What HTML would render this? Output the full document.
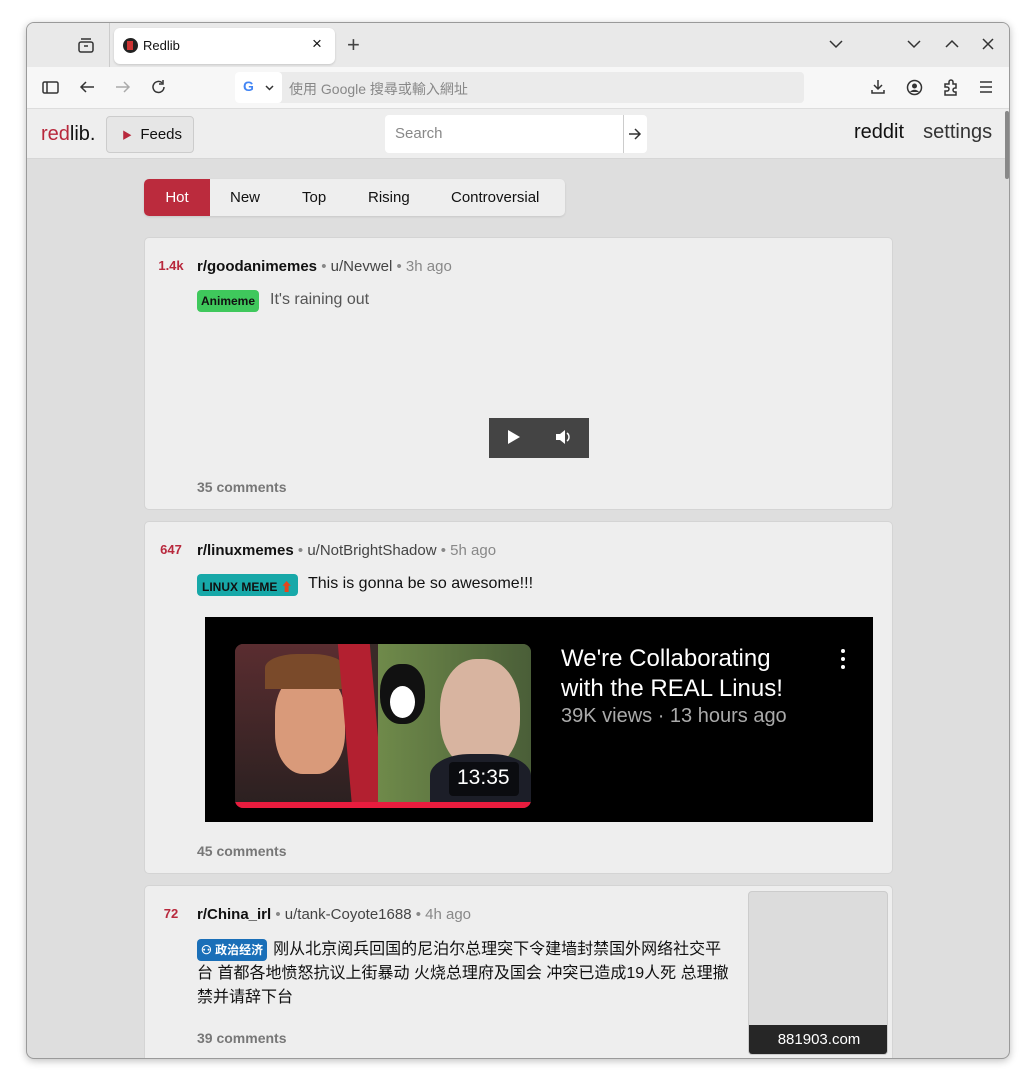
<!DOCTYPE html>
<html><head><meta charset="utf-8">
<style>
*{box-sizing:border-box;margin:0;padding:0}
body{width:1036px;height:1088px;background:#fff;font-family:"Liberation Sans","Noto Sans CJK SC",sans-serif;position:relative;overflow:hidden;color:#111}
.a{position:absolute}
#win{left:26px;top:22px;width:984px;height:1037px;border:1px solid #9a9a9a;border-radius:8px;overflow:hidden;background:#dedede;box-shadow:0 2px 8px rgba(0,0,0,.25)}
#tabs{left:0;top:0;width:984px;height:44px;background:#e9e9e9}
#tool{left:0;top:44px;width:984px;height:42px;background:#f7f7f7;border-bottom:1px solid #ddd}
#hdr{left:0;top:86px;width:984px;height:50px;background:#eeeeee;border-bottom:1px solid #d6d6d6}
.ic{stroke:#333;fill:none;stroke-width:1.5}
.card{background:#eeeeee;border:1px solid #d4d4d4;border-radius:5px}
.score{color:#b8283c;font-size:13px;font-weight:bold;width:40px;text-align:center}
.meta{font-size:15px;color:#444}
.meta b{color:#111}
.meta .g{color:#888}
.cm{font-size:14px;font-weight:bold;color:#777}
</style></head><body>
<div id="win" class="a">
 <div id="tabs" class="a">
  <svg class="a" style="left:50px;top:14px" width="18" height="16"><rect x="2" y="5" width="14" height="10" rx="2" class="ic"/><path d="M4 2h10M7 9h4" class="ic"/></svg>
  <div class="a" style="left:82px;top:0;width:1px;height:44px;background:#ccc"></div>
  <div class="a" style="left:87px;top:5px;width:221px;height:36px;background:#fff;border-radius:6px;box-shadow:0 1px 2px rgba(0,0,0,.15)"></div>
  <div class="a" style="left:96px;top:15px;width:15px;height:15px;border-radius:50%;background:#222"><div class="a" style="left:4px;top:3px;width:6px;height:9px;background:#c33"></div></div>
  <div class="a" style="left:116px;top:15px;font-size:13px">Redlib</div>
  <div class="a" style="left:285px;top:11px;font-size:17px">×</div>
  <div class="a" style="left:320px;top:9px;font-size:22px;color:#444;font-weight:300">+</div>
  <svg class="a" style="left:802px;top:16px" width="14" height="10"><path d="M1 2l6 6 6-6" class="ic"/></svg>
  <svg class="a" style="left:880px;top:16px" width="14" height="10"><path d="M1 2l6 6 6-6" class="ic"/></svg>
  <svg class="a" style="left:918px;top:16px" width="14" height="10"><path d="M1 8l6-6 6 6" class="ic"/></svg>
  <svg class="a" style="left:955px;top:15px" width="12" height="12"><path d="M1 1l10 10M11 1L1 11" class="ic"/></svg>
 </div>
 <div id="tool" class="a">
  <svg class="a" style="left:15px;top:13px" width="18" height="16"><rect x="1" y="2" width="15" height="11" rx="1.5" class="ic"/><path d="M5 2v11" class="ic" stroke-width="3"/></svg>
  <svg class="a" style="left:52px;top:13px" width="16" height="14"><path d="M15 7H2M7 2L2 7l5 5" class="ic"/></svg>
  <svg class="a" style="left:88px;top:13px" width="16" height="14"><path d="M1 7h13M9 2l5 5-5 5" fill="none" stroke="#aaa" stroke-width="1.5"/></svg>
  <svg class="a" style="left:124px;top:12px" width="16" height="16"><path d="M13 8a5.5 5.5 0 1 1-2-4.3M12 1v4H8" class="ic"/></svg>
  <div class="a" style="left:208px;top:5px;width:569px;height:31px;background:#ebebeb;border-radius:4px"></div>
  <div class="a" style="left:208px;top:5px;width:47px;height:31px;background:#fff;border-radius:4px"></div>
  <div class="a" style="left:216px;top:11px;font-size:14px;font-weight:bold;color:#4285f4">G</div>
  <svg class="a" style="left:238px;top:18px" width="9" height="6"><path d="M1 1l3.5 3.5L8 1" class="ic"/></svg>
  <div class="a" style="left:262px;top:12px;font-size:14px;color:#888">使用 Google 搜尋或輸入網址</div>
  <svg class="a" style="left:843px;top:12px" width="16" height="16"><path d="M8 1v9M4 6l4 4 4-4M2 11v3h12v-3" class="ic"/></svg>
  <svg class="a" style="left:879px;top:12px" width="17" height="17"><circle cx="8.5" cy="8.5" r="7" class="ic"/><circle cx="8.5" cy="7" r="2.5" fill="#333"/><path d="M4 13c2-3 7-3 9 0" fill="#333"/></svg>
  <svg class="a" style="left:916px;top:12px" width="16" height="17"><path d="M2 5h4V3a2 2 0 0 1 4 0v2h3v4h-1a2 2 0 0 0 0 4h1v3H2v-4h2a2 2 0 0 0 0-4H2z" class="ic"/></svg>
  <svg class="a" style="left:952px;top:14px" width="14" height="12"><path d="M1 1h12M1 6h12M1 11h12" class="ic"/></svg>
 </div>
 <div id="hdr" class="a">
  <div class="a" style="left:14px;top:14px;font-size:20px"><span style="color:#b8283c">red</span>lib.</div>
  <div class="a" style="left:79px;top:7px;width:88px;height:37px;border:1px solid #ccc;border-radius:4px;background:#e6e6e6;font-size:15px;padding:9px 0 0 15px"><span style="color:#b8283c;font-size:10px">▶</span>&nbsp; Feeds</div>
  <div class="a" style="left:358px;top:6px;width:238px;height:38px;background:#fff;border-radius:4px 0 0 4px;font-size:15px;color:#888;padding:10px 10px">Search</div>
  <div class="a" style="left:596px;top:6px;width:24px;height:38px;background:#fff;border-left:1px solid #ccc;border-radius:0 4px 4px 0"></div>
  <svg class="a" style="left:601px;top:19px" width="14" height="12"><path d="M1 6h11M7 1l5 5-5 5" class="ic"/></svg>
  <div class="a" style="left:827px;top:12px;font-size:20px;color:#111;word-spacing:4px">reddit&nbsp; <span style="color:#333">settings</span></div>
 </div>
 <div class="a" style="left:978px;top:88px;width:4px;height:68px;background:#888;border-radius:2px"></div>
 <div class="a" style="left:117px;top:156px;width:421px;height:37px;background:#eeeeee;border-radius:5px;box-shadow:0 1px 2px rgba(0,0,0,.1);font-size:15px"></div>
 <div class="a" style="left:117px;top:156px;width:66px;height:37px;background:#bb2b3d;border-radius:5px 0 0 5px;color:#fff;font-size:15px;text-align:center;line-height:37px">Hot</div>
 <div class="a" style="left:203px;top:166px;font-size:15px">New</div>
 <div class="a" style="left:275px;top:166px;font-size:15px">Top</div>
 <div class="a" style="left:341px;top:166px;font-size:15px">Rising</div>
 <div class="a" style="left:424px;top:166px;font-size:15px">Controversial</div>
 <div class="a card" style="left:117px;top:214px;width:749px;height:273px"></div>
 <div class="a score" style="left:124px;top:235px">1.4k</div>
 <div class="a meta" style="left:170px;top:235px"><b>r/goodanimemes</b> <span class="g">•</span> u/Nevwel <span class="g">• 3h ago</span></div>
 <div class="a" style="left:170px;top:267px;height:22px;background:#3fc85c;border-radius:4px;font-size:12px;font-weight:bold;padding:4px 4px;color:#111">Animeme</div>
 <div class="a" style="left:243px;top:268px;font-size:16px;color:#555">It's raining out</div>
 <div class="a" style="left:462px;top:395px;width:100px;height:40px;background:#444"></div>
 <svg class="a" style="left:480px;top:406px" width="14" height="16"><path d="M1 1l12 7-12 7z" fill="#fff"/></svg>
 <svg class="a" style="left:528px;top:406px" width="18" height="16"><path d="M1 5h4l5-4v14l-5-4H1z" fill="#fff"/><path d="M12 4a5 5 0 0 1 0 8" stroke="#fff" fill="none" stroke-width="1.5"/></svg>
 <div class="a cm" style="left:170px;top:456px">35 comments</div>
 <div class="a card" style="left:117px;top:498px;width:749px;height:353px"></div>
 <div class="a score" style="left:124px;top:519px">647</div>
 <div class="a meta" style="left:170px;top:519px"><b>r/linuxmemes</b> <span class="g">•</span> u/NotBrightShadow <span class="g">• 5h ago</span></div>
 <div class="a" style="left:170px;top:551px;height:22px;background:#17a8a8;border-radius:4px;font-size:12px;font-weight:bold;padding:4px 5px;color:#111">LINUX MEME <span style="color:#e5461c">⬆</span></div>
 <div class="a" style="left:281px;top:552px;font-size:16px;color:#111">This is gonna be so awesome!!!</div>
 <div class="a" style="left:178px;top:594px;width:668px;height:205px;background:#000;overflow:hidden">
  <div class="a" style="left:30px;top:27px;width:296px;height:164px;border-radius:8px;overflow:hidden;background:#3a2a28">
   <div class="a" style="left:0;top:0;width:120px;height:164px;background:linear-gradient(#5a2d30,#2a2020)"></div>
   <div class="a" style="left:40px;top:30px;width:70px;height:100px;border-radius:40%;background:#d99a7a"></div>
   <div class="a" style="left:30px;top:10px;width:80px;height:35px;border-radius:40% 40% 0 0;background:#7a4a2a"></div>
   <div class="a" style="left:110px;top:0;width:32px;height:164px;background:#b32030;transform:skewX(5deg)"></div>
   <div class="a" style="left:143px;top:0;width:153px;height:164px;background:linear-gradient(90deg,#6f8a4a,#4a5e38)"></div>
   <div class="a" style="left:145px;top:20px;width:45px;height:60px;border-radius:45%;background:#111"><div class="a" style="left:10px;top:22px;width:25px;height:32px;border-radius:50%;background:#fff"></div></div>
   <div class="a" style="left:205px;top:15px;width:80px;height:110px;border-radius:45%;background:#d8b4a0"></div>
   <div class="a" style="left:195px;top:110px;width:101px;height:54px;background:#1c1e28;border-radius:40% 40% 0 0"></div>
   <div class="a" style="left:214px;top:118px;width:70px;height:34px;background:rgba(0,0,0,.6);border-radius:4px;color:#fff;font-size:21px;padding:4px 8px">13:35</div>
   <div class="a" style="left:0;top:158px;width:296px;height:6px;background:#e81c3e"></div>
  </div>
  <div class="a" style="left:356px;top:27px;color:#fff;font-size:24px;line-height:30px">We're Collaborating<br>with the REAL Linus!</div>
  <div class="a" style="left:356px;top:88px;color:#aaa;font-size:20px">39K views · 13 hours ago</div>
  <div class="a" style="left:636px;top:32px;width:4px;height:4px;background:#fff;border-radius:50%;box-shadow:0 8px 0 #fff,0 16px 0 #fff"></div>
 </div>
 <div class="a cm" style="left:170px;top:820px">45 comments</div>
 <div class="a card" style="left:117px;top:862px;width:749px;height:190px"></div>
 <div class="a score" style="left:124px;top:883px">72</div>
 <div class="a meta" style="left:170px;top:883px"><b>r/China_irl</b> <span class="g">•</span> u/tank-Coyote1688 <span class="g">• 4h ago</span></div>
 <div class="a" style="left:170px;top:915px;width:534px;font-size:16px;line-height:24px;color:#111"><span style="display:inline-block;background:#1a6fb8;color:#fff;font-size:12px;font-weight:bold;border-radius:4px;padding:0 4px;line-height:22px;margin-right:6px">⚇ 政治经济</span>刚从北京阅兵回国的尼泊尔总理突下令建墙封禁国外网络社交平台 首都各地愤怒抗议上街暴动 火烧总理府及国会 冲突已造成19人死 总理撤禁并请辞下台</div>
 <div class="a cm" style="left:170px;top:1007px">39 comments</div>
 <div class="a" style="left:721px;top:868px;width:140px;height:164px;background:#dcdcdc;border:1px solid #ccc;border-radius:4px;overflow:hidden"><div class="a" style="left:0;bottom:0;width:140px;height:29px;background:#262626;color:#fff;font-size:15px;text-align:center;line-height:29px">881903.com</div></div>
</div>
</body></html>
